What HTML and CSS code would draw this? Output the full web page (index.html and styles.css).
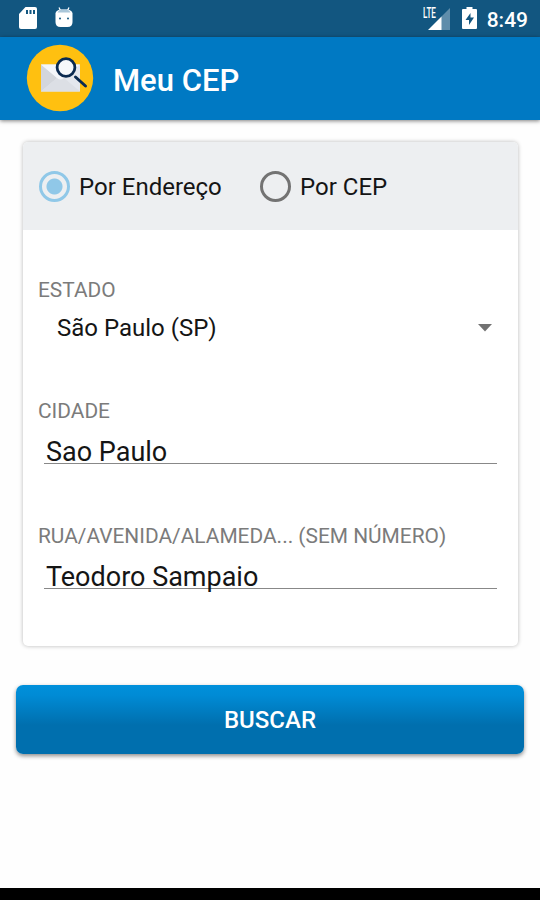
FILE: index.html
```
<!DOCTYPE html>
<html lang="pt-BR">
<head>
    <meta charset="UTF-8">
    <title>Meu CEP</title>
    <link rel="stylesheet" href="styles.css">
</head>

<body>

<div class="status-bar">
    <svg class="icon-sd" width="18" height="22" viewBox="0 0 18 22">
        <path fill="#fff" d="M6.500 0H16q2 0 2 2V20q0 2-2 2H2q-2 0-2-2V7z"/>
        <path fill="#125680" d="M7 3h2v4H7zM10.500 3h2v4h-2zM14 3h2v4h-2z"/>
    </svg>
    <svg class="icon-android" width="18" height="21" viewBox="0 0 18 21">
        <path stroke="#fff" stroke-width="1.300" d="M4 .5l1.500 3M14 .5l-1.500 3"/>
        <path fill="#fff" d="M.5 6Q2 2.500 6 2.500h6q4 0 5.500 3.500V15q0 5-5 5h-7q-5 0-5-5z"/>
        <path fill="#a9c6d9" d="M2.500 5.500Q4 2.500 7 2.500h4q3 0 4.500 3z"/>
        <circle fill="#125680" cx="5" cy="11.500" r="1"/>
        <circle fill="#125680" cx="13" cy="11.500" r="1"/>
    </svg>
    <div class="status-right">
        <span class="lte">LTE</span>
        <svg class="icon-signal" width="22" height="22" viewBox="0 0 22 22">
            <path fill="#5f8dab" d="M22 0v22h-9V9z"/>
            <path fill="#fff" d="M13.500 8.500V22H0z"/>
        </svg>
        <svg class="icon-battery" width="15" height="22" viewBox="0 0 15 22">
            <path fill="#fff" d="M4.500 0h6v2H14q1 0 1 1v18q0 1-1 1H1q-1 0-1-1V3q0-1 1-1h3.500z"/>
            <path fill="#125680" d="M8.500 6L3.500 13H7v5l5-7.500H8.500z"/>
        </svg>
        <span class="clock">8:49</span>
    </div>
</div>

<header class="app-bar">
    <svg class="logo" width="68" height="68" viewBox="0 0 68 68">
        <circle fill="#ffc010" cx="34" cy="34" r="33.200"/>
        <path fill="#e4e7ed" d="M15 20.500h39v27H15z"/>
        <path fill="#d3d6dc" d="M15 20.500L31 34 15 47.500z"/>
        <path fill="#dcdfe5" d="M15 47.500L31 34h7l16 13.500z"/>
        <path fill="#f4f6fa" d="M15 20.500h39L38 34q-3.500 3-7 0z"/>
        <circle fill="#f6f8fb" stroke="#0b2a50" stroke-width="2.800" cx="40" cy="23.500" r="8.900"/>
        <path stroke="#0b2a50" stroke-width="3" stroke-linecap="round" d="M49.500 33l10 9"/>
    </svg>
    <h1 class="title">Meu CEP</h1>
</header>

<form class="search-form">
    <div class="card">
        <div class="search-type">
            <label class="option option-address"><input class="radio" type="radio" name="type" checked>Por Endereço</label>
            <label class="option"><input class="radio" type="radio" name="type">Por CEP</label>
        </div>

        <div class="fields">
            <label class="field-label" for="state">ESTADO</label>
            <div class="select-box">
                <select class="select" id="state">
                    <option selected>São Paulo (SP)</option>
                </select>
                <svg width="14" height="8" viewBox="0 0 14 8"><path fill="#727272" d="M0 0h14L7 7.500z"/></svg>
            </div>

            <label class="field-label" for="city">CIDADE</label>
            <div class="text-field"><input class="text-input" id="city" type="text" value="Sao Paulo"></div>

            <label class="field-label" for="street">RUA/AVENIDA/ALAMEDA... (SEM NÚMERO)</label>
            <div class="text-field"><input class="text-input" id="street" type="text" value="Teodoro Sampaio"></div>
        </div>
    </div>

    <button class="search-button" type="button">BUSCAR</button>
</form>

<div class="nav-bar"></div>

</body>
</html>
```
FILE: styles.css
```
* {
    box-sizing: border-box;
}

body {
    margin: 0;
    height: 900px;
    display: flex;
    flex-direction: column;
    overflow: hidden;
    background: #fefefe;
    font-family: Roboto, sans-serif;
    color: #151515;
}

.status-bar {
    height: 37px;
    padding: 7px 12px 0 19px;
    display: flex;
    align-items: flex-start;
    background: #125680;
    color: #fff;
}

.icon-android {
    margin-left: 18px;
}

.status-right {
    margin-left: auto;
    display: flex;
}

.lte {
    width: 14px;
    margin-right: -9px;
    font-size: 14px;
    line-height: 13px;
    font-weight: 500;
    transform: scaleX(0.58);
    transform-origin: 0 0;
}

.icon-signal {
    margin-top: 1px;
}

.icon-battery {
    margin-left: 12px;
}

.clock {
    margin-left: 10px;
    font-size: 21px;
    line-height: 26px;
    font-weight: 500;
}

.app-bar {
    height: 83px;
    padding: 0 0 2px 26px;
    display: flex;
    align-items: center;
    background: #0079c3;
    box-shadow: 0 1px 4px rgba(0, 0, 0, 0.5);
}

.title {
    margin: 7px 0 0 19px;
    font-size: 31px;
    line-height: 36px;
    font-weight: 500;
    color: #fff;
}

.search-form {
    padding: 22px 16px 0;
}

.card {
    height: 504px;
    margin: 0 6px 0 7px;
    overflow: hidden;
    border-radius: 5px;
    background: #fff;
    box-shadow: 0 0 4px rgba(0, 0, 0, 0.28);
}

.search-type {
    height: 88px;
    padding: 2px 0 0 16px;
    display: flex;
    align-items: center;
    background: #edeff1;
}

.option {
    display: flex;
    align-items: center;
    font-size: 24px;
    line-height: 28px;
}

.option-address {
    width: 221px;
}

.radio {
    appearance: none;
    width: 31px;
    height: 31px;
    margin: 0 9px 2px 0;
    border: 3px solid #737373;
    border-radius: 50%;
}

.radio:checked {
    border-color: #90c8e8;
    background: radial-gradient(circle, #90c8e8 7.5px, transparent 8.5px);
}

.fields {
    padding: 48px 21px 0 15px;
}

.field-label {
    display: block;
    font-size: 20.9px;
    line-height: 25px;
    color: #7b7b7b;
}

.select-box {
    height: 50px;
    margin-bottom: 46px;
    padding: 0 5px 0 19px;
    display: flex;
    align-items: center;
}

.select {
    appearance: none;
    flex: 1;
    padding: 0;
    border: 0;
    background: none;
    font: 24px Roboto, sans-serif;
    color: #151515;
}

.text-field {
    height: 40px;
    margin: 0 0 60px 6px;
    border-bottom: 1.5px solid #888;
}

/* taller than its field, so descenders cross the underline */
.text-input {
    display: block;
    width: 100%;
    height: 48px;
    padding: 8px 0 0 2px;
    border: 0;
    outline: 0;
    background: none;
    font: 27px Roboto, sans-serif;
    color: #151515;
}

.search-button {
    display: block;
    width: 100%;
    height: 69px;
    margin-top: 39px;
    border: 0;
    border-radius: 7px;
    background: linear-gradient(#0090db, #008bd5 15%, #006fae 58%, #006fae);
    box-shadow: 0 2px 4px rgba(0, 0, 0, 0.45);
    font: 500 24px Roboto, sans-serif;
    color: #fff;
}

.nav-bar {
    height: 12px;
    margin-top: auto;
    background: #000;
}
```
